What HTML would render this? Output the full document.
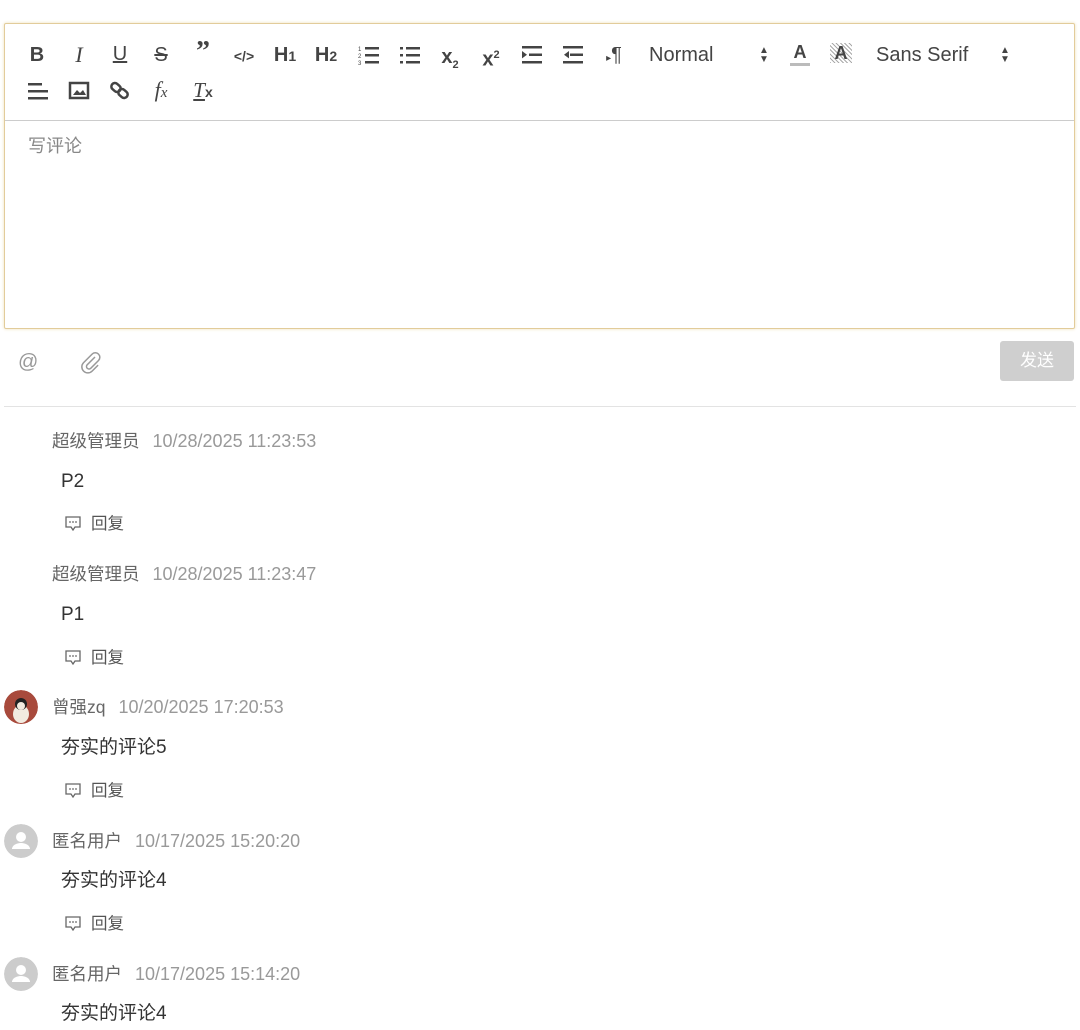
<!DOCTYPE html>
<html><head><meta charset="utf-8"><style>
*{margin:0;padding:0;box-sizing:border-box}
body{width:1080px;height:1030px;background:#fff;position:relative;overflow:hidden;font-family:"Liberation Sans","Noto Sans CJK SC",sans-serif}
.a{position:absolute}
.ed{left:4px;top:23px;width:1071px;height:306px;border:1px solid #e2cc9a;box-shadow:0 0 3px #eedfb8;border-radius:2px}
.sep{left:5px;top:120px;width:1069px;height:1px;background:#ccc}
.ic{position:absolute;color:#444;font-weight:bold;font-size:20px;line-height:20px;text-align:center;width:24px;margin-left:-12px}
.t{color:#444;font-size:20px}
.name{font-size:17.5px;color:#666;white-space:nowrap;line-height:20px}
.name span{color:#999;margin-left:13px;font-size:18px}
.ct{font-size:19px;color:#333;line-height:20px}
.rp{font-size:16.5px;color:#555;line-height:20px}
.av{width:34px;height:34px;border-radius:50%;left:4px}
</style></head><body>
<div class="a ed"></div>
<div class="a sep"></div>

<div class="ic" style="left:37px;top:45px">B</div>
<div class="ic" style="left:79px;top:45px;font-family:'Liberation Serif',serif;font-style:italic;font-weight:normal;font-size:22px">I</div>
<div class="ic" style="left:120px;top:44px;text-decoration:underline;font-weight:normal">U</div>
<div class="ic" style="left:161px;top:45px;text-decoration:line-through;font-weight:normal">S</div>
<div class="ic" style="left:203px;top:42px;font-family:'Liberation Serif',serif;font-size:28px">”</div>
<div class="ic" style="left:244px;top:46px;font-size:14px">&lt;/&gt;</div>
<div class="ic" style="left:285px;top:45px;width:30px;margin-left:-15px">H<span style="font-size:14px">1</span></div>
<div class="ic" style="left:326px;top:45px;width:30px;margin-left:-15px">H<span style="font-size:14px">2</span></div>
<svg class="a" style="left:358px;top:45px" width="22" height="20"><g fill="#444"><rect x="7" y="2" width="14" height="2.5"/><rect x="7" y="9" width="14" height="2.5"/><rect x="7" y="16" width="14" height="2.5"/></g><text x="0" y="6" font-size="6" fill="#444">1</text><text x="0" y="13" font-size="6" fill="#444">2</text><text x="0" y="20" font-size="6" fill="#444">3</text></svg>
<svg class="a" style="left:399px;top:45px" width="22" height="20"><g fill="#444"><rect x="7" y="2" width="14" height="2.5"/><rect x="7" y="9" width="14" height="2.5"/><rect x="7" y="16" width="14" height="2.5"/><rect x="1" y="2" width="3" height="2.5"/><rect x="1" y="9" width="3" height="2.5"/><rect x="1" y="16" width="3" height="2.5"/></g></svg>
<div class="ic" style="left:450px;top:47px;width:30px;margin-left:-15px">x<sub style="font-size:11px">2</sub></div>
<div class="ic" style="left:491px;top:45px;width:30px;margin-left:-15px">x<sup style="font-size:11px">2</sup></div>
<svg class="a" style="left:521px;top:45px" width="22" height="20"><g fill="#444"><rect x="1" y="1" width="20" height="2.5"/><rect x="8" y="8.5" width="13" height="2.5"/><rect x="1" y="16" width="20" height="2.5"/><path d="M1 6l5 3.7-5 3.7z"/></g></svg>
<svg class="a" style="left:562px;top:45px" width="22" height="20"><g fill="#444"><rect x="1" y="1" width="20" height="2.5"/><rect x="8" y="8.5" width="13" height="2.5"/><rect x="1" y="16" width="20" height="2.5"/><path d="M7 6l-5 3.7 5 3.7z"/></g></svg>
<div class="ic" style="left:614px;top:45px;width:30px;margin-left:-15px;font-weight:normal"><span style="font-size:10px">▸</span>¶</div>
<div class="a t" style="left:649px;top:44px">Normal</div>
<div class="a" style="left:759px;top:46px;font-size:10px;line-height:9px;color:#444">▲<br>▼</div>
<div class="ic" style="left:800px;top:42px;font-size:18px;border-bottom:3px solid #bbb;width:20px;margin-left:-10px;height:24px">A</div>
<div class="ic" style="left:841px;top:43px;font-size:18px;background:repeating-linear-gradient(45deg,#aaa 0 1px,#fff 1px 3px);width:22px;margin-left:-11px">A</div>
<div class="a t" style="left:876px;top:44px">Sans Serif</div>
<div class="a" style="left:1000px;top:46px;font-size:10px;line-height:9px;color:#444">▲<br>▼</div>

<svg class="a" style="left:27px;top:81px" width="22" height="20"><g fill="#444"><rect x="1" y="2" width="14" height="2.5"/><rect x="1" y="9" width="20" height="2.5"/><rect x="1" y="16" width="20" height="2.5"/></g></svg>
<svg class="a" style="left:68px;top:81px" width="22" height="20"><rect x="2" y="2" width="18" height="15" fill="none" stroke="#444" stroke-width="2.5"/><path d="M5 14l4-5 3 3 3-3 3 5z" fill="#444"/></svg>
<svg class="a" style="left:109px;top:80px" width="22" height="22"><g fill="none" stroke="#444" stroke-width="2.5"><rect x="2" y="4" width="10" height="7" rx="3.5" transform="rotate(40 7 7.5)"/><rect x="9" y="10" width="10" height="7" rx="3.5" transform="rotate(40 14 13.5)"/></g></svg>
<div class="ic" style="left:161px;top:80px;font-family:'Liberation Serif',serif;font-style:italic;font-weight:normal;font-size:22px;width:30px;margin-left:-15px">f<span style="font-size:15px">x</span></div>
<div class="ic" style="left:203px;top:80px;font-family:'Liberation Serif',serif;font-style:italic;font-weight:normal;font-size:21px;width:30px;margin-left:-15px"><u>T</u><span style="font-style:normal;font-family:'Liberation Sans';font-weight:bold;font-size:14px">x</span></div>

<div class="a" style="left:28px;top:132px;font-size:18px;color:#888">写评论</div>

<div class="a" style="left:18px;top:351px;font-size:20px;color:#999">@</div>
<svg class="a" style="left:78px;top:350px" width="24" height="24"><path d="M17 7l-8 8a2.5 2.5 0 0 0 3.5 3.5l8-8a4.5 4.5 0 0 0-6.4-6.4l-8.5 8.5a6 6 0 0 0 8.5 8.5l6-6" fill="none" stroke="#999" stroke-width="1.5"/></svg>
<div class="a" style="left:1000px;top:341px;width:74px;height:40px;background:#cfcfcf;border-radius:3px;color:#fff;font-size:17px;text-align:center;line-height:40px">发送</div>
<div class="a" style="left:4px;top:406px;width:1072px;height:1px;background:#e3e3e3"></div>

<div class="a name" style="left:52px;top:431px">超级管理员<span>10/28/2025 11:23:53</span></div>
<div class="a ct" style="left:61px;top:472px">P2</div>
<div class="a rp" style="left:65px;top:514px"><svg width="16" height="15" style="vertical-align:-2px;margin-right:10px"><path d="M1 1h14v10H10l-2 3-2-3H1z" fill="none" stroke="#666" stroke-width="1.3"/><g fill="#666"><circle cx="5" cy="6" r=".9"/><circle cx="8" cy="6" r=".9"/><circle cx="11" cy="6" r=".9"/></g></svg>回复</div>

<div class="a name" style="left:52px;top:564px">超级管理员<span>10/28/2025 11:23:47</span></div>
<div class="a ct" style="left:61px;top:605px">P1</div>
<div class="a rp" style="left:65px;top:648px"><svg width="16" height="15" style="vertical-align:-2px;margin-right:10px"><path d="M1 1h14v10H10l-2 3-2-3H1z" fill="none" stroke="#666" stroke-width="1.3"/><g fill="#666"><circle cx="5" cy="6" r=".9"/><circle cx="8" cy="6" r=".9"/><circle cx="11" cy="6" r=".9"/></g></svg>回复</div>

<svg class="a av" style="top:690px" width="34" height="34" viewBox="0 0 34 34"><circle cx="17" cy="17" r="17" fill="#a84a3c"/><ellipse cx="17" cy="24" rx="8" ry="9" fill="#f2ebe0"/><circle cx="17" cy="14" r="6" fill="#222"/><circle cx="17" cy="16" r="4" fill="#f2ebe0"/></svg>
<div class="a name" style="left:52px;top:697px">曾强zq<span>10/20/2025 17:20:53</span></div>
<div class="a ct" style="left:61px;top:738px">夯实的评论5</div>
<div class="a rp" style="left:65px;top:781px"><svg width="16" height="15" style="vertical-align:-2px;margin-right:10px"><path d="M1 1h14v10H10l-2 3-2-3H1z" fill="none" stroke="#666" stroke-width="1.3"/><g fill="#666"><circle cx="5" cy="6" r=".9"/><circle cx="8" cy="6" r=".9"/><circle cx="11" cy="6" r=".9"/></g></svg>回复</div>

<svg class="a av" style="top:824px" width="34" height="34" viewBox="0 0 34 34"><circle cx="17" cy="17" r="17" fill="#ccc"/><circle cx="17" cy="13" r="5" fill="#fff"/><path d="M8 25a9 6 0 0 1 18 0z" fill="#fff"/></svg>
<div class="a name" style="left:52px;top:831px">匿名用户<span>10/17/2025 15:20:20</span></div>
<div class="a ct" style="left:61px;top:871px">夯实的评论4</div>
<div class="a rp" style="left:65px;top:914px"><svg width="16" height="15" style="vertical-align:-2px;margin-right:10px"><path d="M1 1h14v10H10l-2 3-2-3H1z" fill="none" stroke="#666" stroke-width="1.3"/><g fill="#666"><circle cx="5" cy="6" r=".9"/><circle cx="8" cy="6" r=".9"/><circle cx="11" cy="6" r=".9"/></g></svg>回复</div>

<svg class="a av" style="top:957px" width="34" height="34" viewBox="0 0 34 34"><circle cx="17" cy="17" r="17" fill="#ccc"/><circle cx="17" cy="13" r="5" fill="#fff"/><path d="M8 25a9 6 0 0 1 18 0z" fill="#fff"/></svg>
<div class="a name" style="left:52px;top:964px">匿名用户<span>10/17/2025 15:14:20</span></div>
<div class="a ct" style="left:61px;top:1004px">夯实的评论4</div>
</body></html>
